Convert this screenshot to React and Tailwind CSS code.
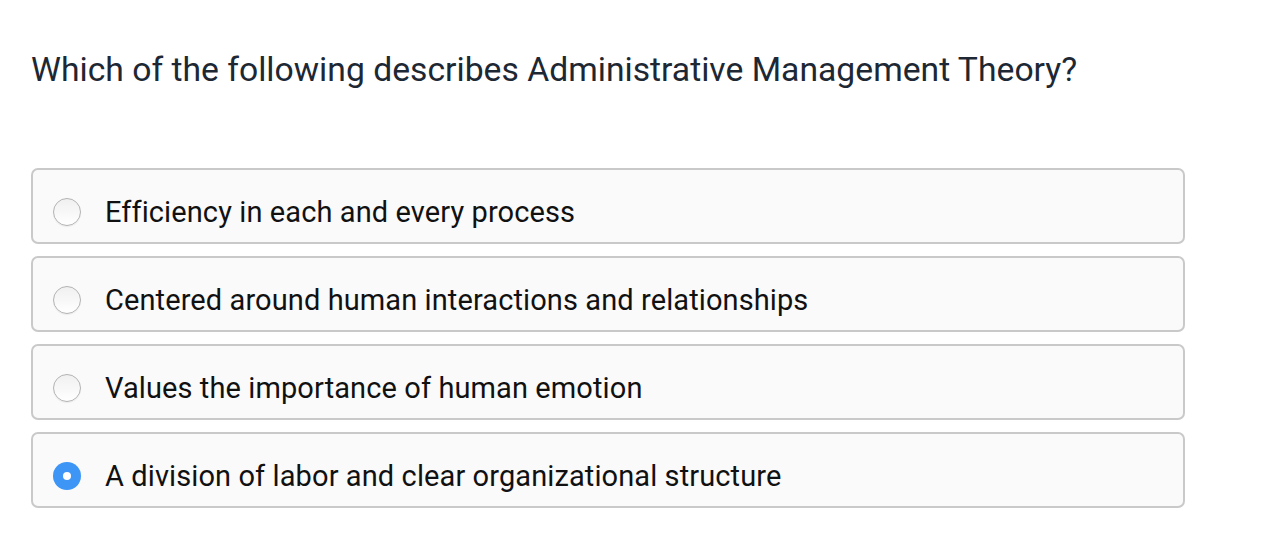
import React, { useState } from 'react';

const options = [
  'Efficiency in each and every process',
  'Centered around human interactions and relationships',
  'Values the importance of human emotion',
  'A division of labor and clear organizational structure',
];

const Radio = ({ checked }) =>
  checked ? (
    <span className="flex h-[28px] w-[28px] shrink-0 items-center justify-center rounded-full bg-[#3d95f6]">
      <span className="h-[8px] w-[8px] rounded-full bg-white" />
    </span>
  ) : (
    <span className="h-[28px] w-[28px] shrink-0 rounded-full border border-[#b3b3b3] bg-gradient-to-b from-[#f0f0f0] to-white shadow-[0_1px_1px_rgba(0,0,0,0.06)]" />
  );

const App = () => {
  const [selected, setSelected] = useState(3);

  return (
    <div className="min-h-screen bg-white pl-[31px] pr-[103px] pt-[50px] font-['Roboto',sans-serif]">
      <h1 className="text-[33.7px] leading-[40px] text-[#1d2834]">
        Which of the following describes Administrative Management Theory?
      </h1>
      <div className="mt-[78px] flex flex-col gap-[12px]">
        {options.map((text, index) => (
          <button
            key={index}
            onClick={() => setSelected(index)}
            className="flex h-[76px] items-center gap-[24px] rounded-[7px] border-2 border-[#c9c9c9] bg-[#fafafa] pl-[20px] pt-[12px] text-left"
          >
            <Radio checked={selected === index} />
            <span className="text-[29px] leading-[32px] tracking-[0.1px] text-[#111111]">{text}</span>
          </button>
        ))}
      </div>
    </div>
  );
};

export default App;
